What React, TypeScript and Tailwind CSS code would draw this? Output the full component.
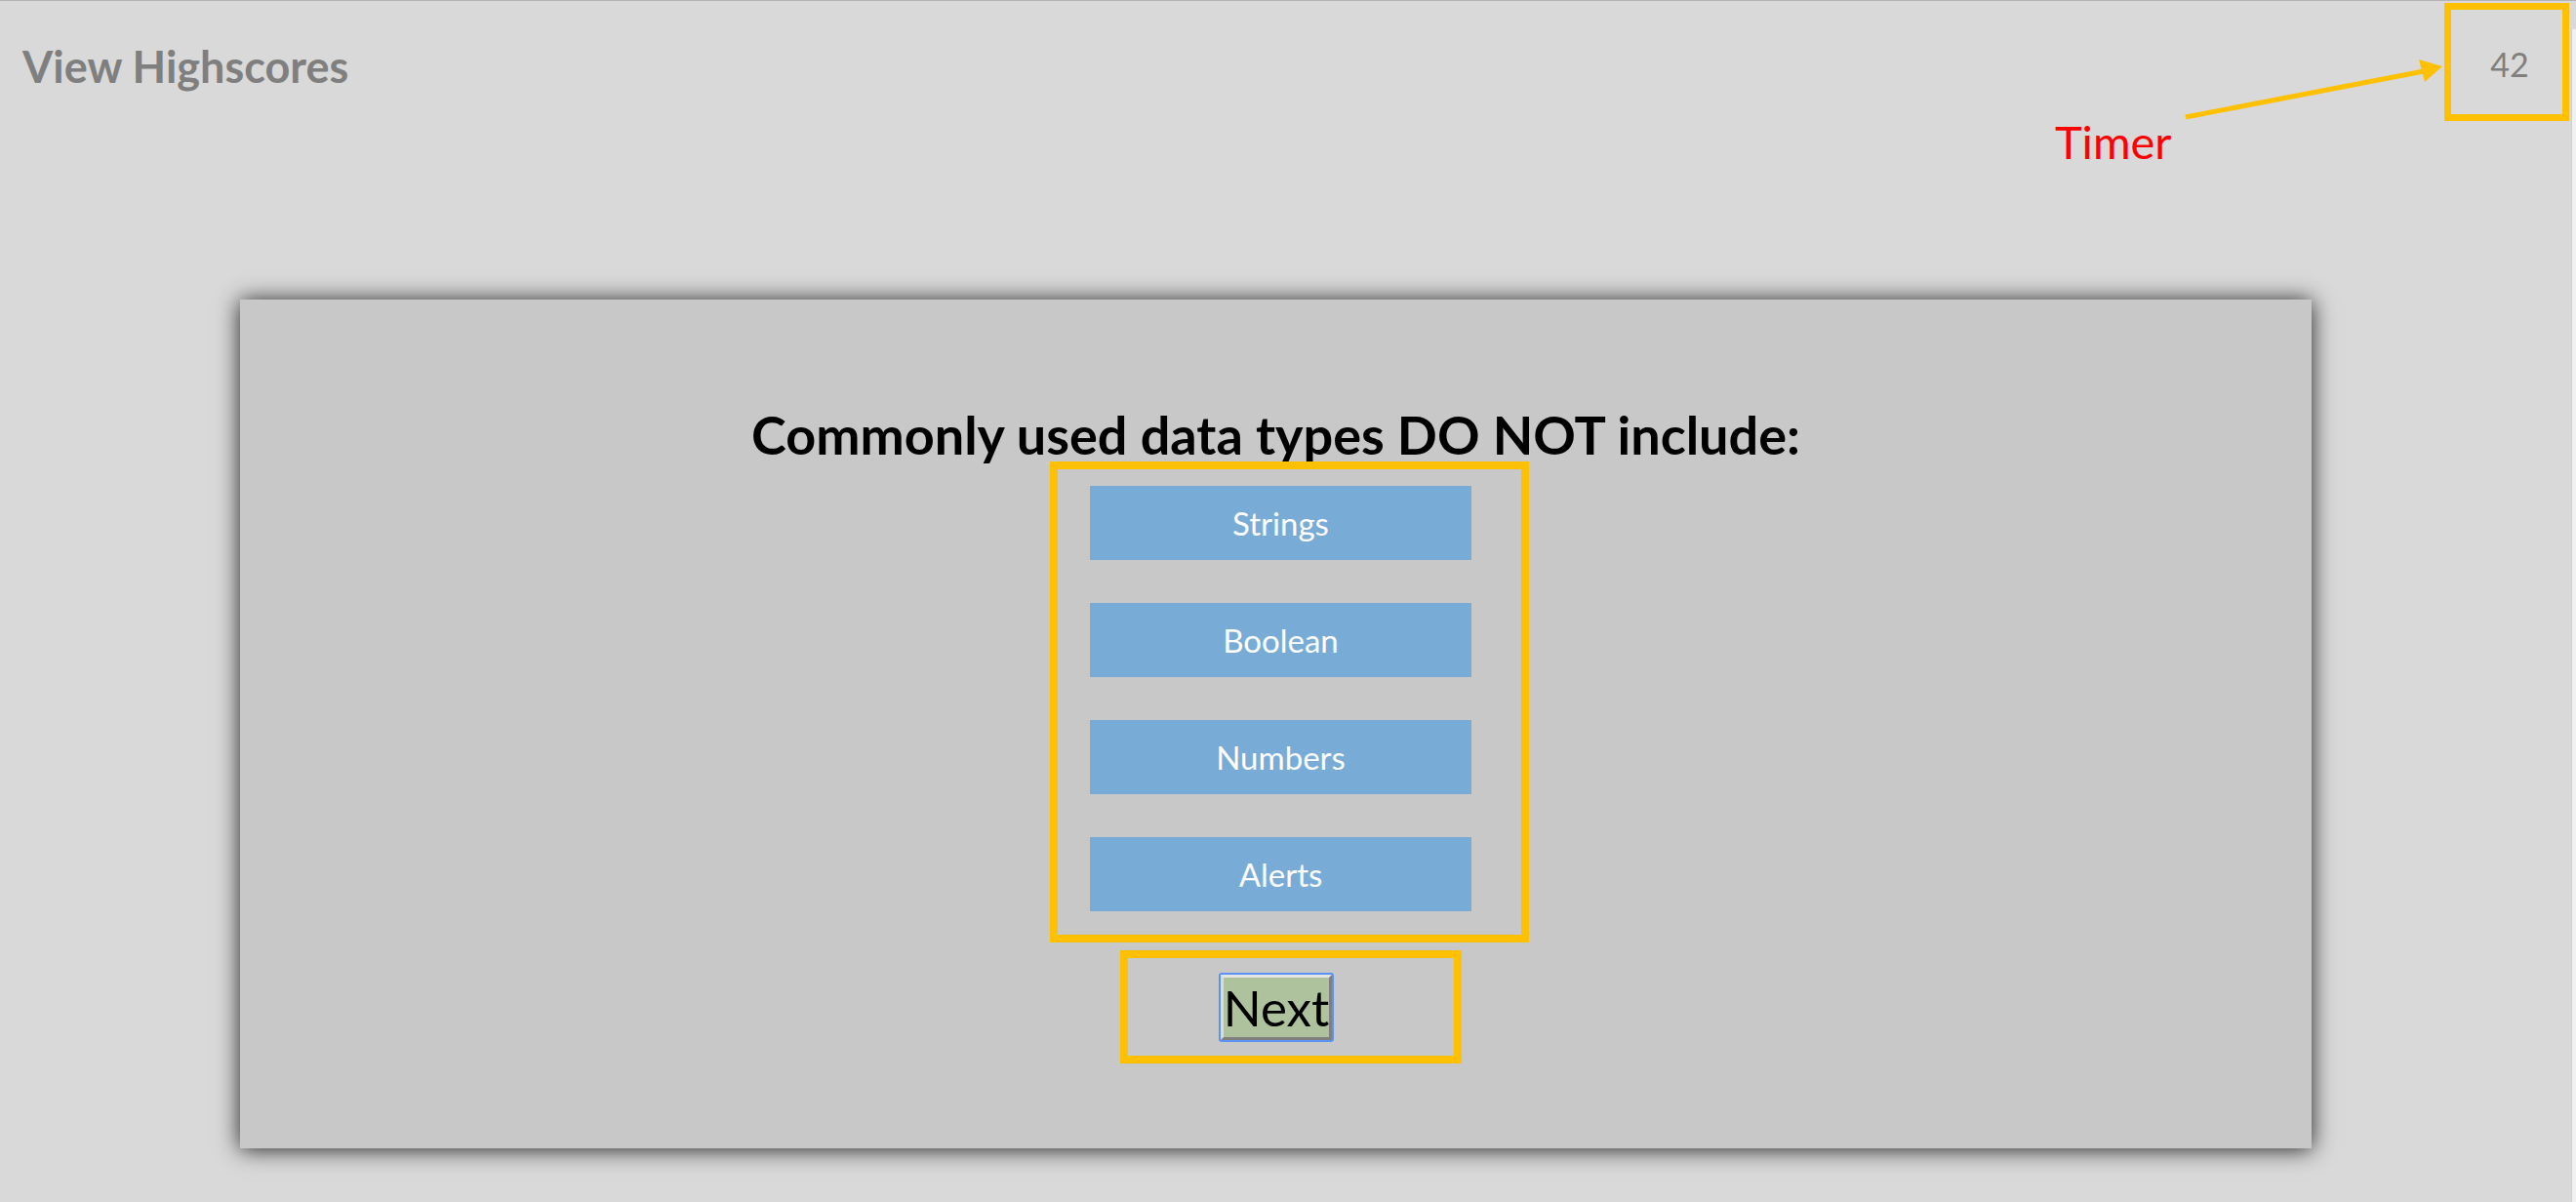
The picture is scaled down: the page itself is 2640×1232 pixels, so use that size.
import React from "react";

const answers = ["Strings", "Boolean", "Numbers", "Alerts"];

export default function App() {
  return (
    <div
      className="relative flex min-h-screen w-[2640px] border-t border-[#b4b4b4] bg-[#d9d9d9]"
      style={{ fontFamily: "Lato, 'Liberation Sans', sans-serif" }}
    >
      <div className="flex w-[2635px] flex-col pb-[55px]">
        <header className="flex h-[306px] items-start justify-between">
          <div className="ml-[23px] mt-[45px] text-[45px] font-bold leading-none text-[#7f7f7f]">
            View Highscores
          </div>
          <div className="mr-[2px] mt-[2px] flex h-[121px] w-[128px] items-center justify-center border-[7px] border-[#ffc000] pl-[6px] pt-[4px] text-[34px] leading-none text-[#7f7f7f]">
            42
          </div>
        </header>

        <main className="ml-[246px] flex h-[870px] w-[2123px] flex-col bg-[#c8c8c8] shadow-[0_1px_22px_rgba(0,0,0,0.85)]">
          <h1 className="pt-[112px] text-center text-[54px] font-bold leading-none text-black">
            Commonly used data types DO NOT include:
          </h1>

          <div className="ml-[830px] flex h-[493px] w-[491px] flex-col gap-[44px] border-8 border-[#ffc000] pl-[33px] pt-[17px]">
            {answers.map((a) => (
              <button
                key={a}
                className="flex h-[76px] w-[391px] items-center justify-center bg-[#78acd7] text-[33px] leading-none text-white"
              >
                {a}
              </button>
            ))}
          </div>

          <div className="ml-[902px] mt-[8px] h-[116px] w-[350px] border-8 border-[#ffc000] pl-[93px] pt-[15px]">
            <div className="h-[71px] w-[118px] rounded-[3px] border-2 border-[#5b93f2]">
              <button className="flex h-full w-full items-center justify-center overflow-visible whitespace-nowrap border-b-[3px] border-l-[3px] border-r-[3px] border-t-[3px] border-b-[#7f7f7f] border-l-[#dcdcdc] border-r-[#7f7f7f] border-t-[#e4e4e4] bg-[#adc29d] text-[51px] leading-none text-black">
                Next
              </button>
            </div>
          </div>
        </main>
      </div>
      <div className="mt-[29px] w-[5px] border-l border-[#cfcfcf] bg-[#f1f1f1]" />

      {/* annotation: Timer label + arrow */}
      <div className="absolute left-[2106px] top-[121px] text-[47px] leading-none text-[#ff0000]">
        Timer
      </div>
      <svg
        className="absolute left-[2200px] top-[40px]"
        width="320"
        height="100"
        viewBox="2200 40 320 100"
      >
        <line x1="2240" y1="119" x2="2484" y2="72" stroke="#ffc000" strokeWidth="5" />
        <polygon points="2503,67 2479,60 2485,83" fill="#ffc000" />
      </svg>
    </div>
  );
}
